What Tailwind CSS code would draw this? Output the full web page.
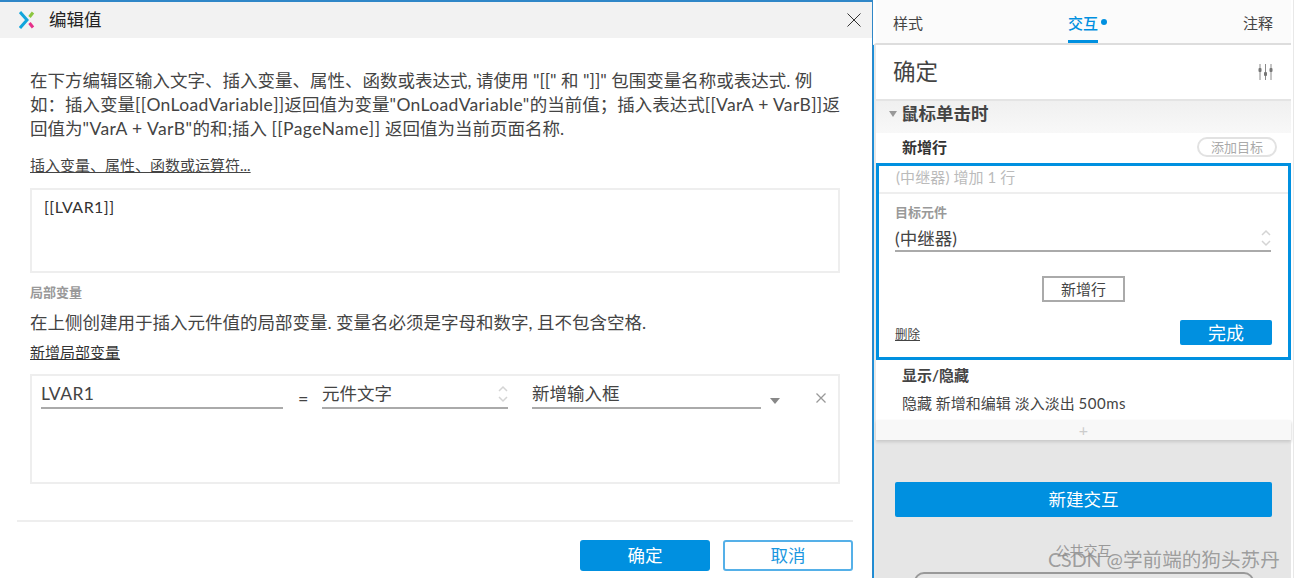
<!DOCTYPE html>
<html lang="zh">
<head>
<meta charset="utf-8">
<script src="https://cdn.jsdelivr.net/npm/@tailwindcss/browser@4"></script>
</head>
<body class="m-0 bg-white">
<div class="relative flex h-[578px] w-[1295px] overflow-hidden bg-white font-['Lato','Noto_Sans_CJK_SC',sans-serif] text-[#333]">
  <!-- Dialog -->
  <div class="flex h-full w-[873px] shrink-0 flex-col border-t-2 border-r border-[#2f87c8] bg-white">
    <div class="flex h-[36px] shrink-0 items-center bg-[#f2f2f2] pl-[19px] pr-[11px]">
      <svg class="h-[20px] w-[16px]" viewBox="0 0 16 20" fill="none" stroke-width="3">
        <path d="M1 2L8 10L1 18" stroke="#12a5dc"/>
        <path d="M14 2.500L10.500 7" stroke="#8cc63f"/>
        <path d="M10.500 13L14 17.500" stroke="#e6308a"/>
      </svg>
      <span class="ml-[14px] text-[17.500px] leading-none text-[#222]">编辑值</span>
      <svg class="ml-auto h-[14px] w-[14px]" viewBox="0 0 14 14" fill="none" stroke="#333" stroke-width="1"><path d="M0.500 0.500L13.500 13.500M13.500 0.500L0.500 13.500"/></svg>
    </div>
    <div class="flex flex-1 flex-col pl-[30px] pr-[31px]">
      <p class="mt-[31px] whitespace-nowrap text-[17.500px] leading-[24px] text-[#444]">在下方编辑区输入文字、插入变量、属性、函数或表达式, 请使用 "[[" 和 "]]" 包围变量名称或表达式. 例<br>如：插入变量<span class="tracking-[0.35px]">[[OnLoadVariable]]</span>返回值为变量<span class="tracking-[0.35px]">"OnLoadVariable"</span>的当前值；插入表达式<span class="tracking-[0.35px]">[[VarA + VarB]]</span>返<br>回值为<span class="tracking-[0.44px]">"VarA + VarB"</span>的和;插入 <span class="tracking-[0.44px]">[[PageName]]</span> 返回值为当前页面名称.</p>
      <a class="mt-[13px] self-start text-[15px] leading-[22px] text-[#444] underline">插入变量、属性、函数或运算符...</a>
      <div class="mt-[12px] h-[85px] w-[810px] border-2 border-[#eeeeee] px-[12px] py-[6px] text-[16px] leading-[22px] tracking-[0.45px] text-[#333]">[[LVAR1]]</div>
      <div class="mt-[10px] text-[13px] font-semibold leading-[18px] text-[#999]">局部变量</div>
      <p class="mt-[10px] text-[17.500px] leading-[24px] text-[#444]">在上侧创建用于插入元件值的局部变量. 变量名必须是字母和数字, 且不包含空格.</p>
      <a class="mt-[6px] self-start text-[15px] leading-[22px] text-[#333] underline">新增局部变量</a>
      <div class="mt-[11px] flex h-[110px] w-[810px] items-start border-2 border-[#eeeeee] pl-[9px] pt-[4px]">
        <div class="h-[29px] w-[242px] border-b-2 border-[#aaaaaa] text-[17.500px] leading-[28px] tracking-[0.4px] text-[#444]">LVAR1</div>
        <span class="ml-[15px] mr-[14px] mt-[5px] w-[10px] text-center text-[18px] leading-[26px] text-[#444]">=</span>
        <div class="flex h-[29px] w-[186px] items-start justify-between border-b-2 border-[#aaaaaa] text-[17.500px] leading-[28px] text-[#444]">
          <span>元件文字</span>
          <svg class="mt-[5px] h-[18px] w-[10px]" viewBox="0 0 10 18" fill="none" stroke="#d4d4d4" stroke-width="1.500"><path d="M1 6L5 2L9 6M1 12L5 16L9 12"/></svg>
        </div>
        <div class="ml-[24px] h-[29px] w-[229px] border-b-2 border-[#aaaaaa] text-[17.500px] leading-[28px] text-[#444]">新增输入框</div>
        <span class="ml-[9px] mt-[18px] h-0 w-0 border-x-[5px] border-t-[6px] border-x-transparent border-t-[#888888]"></span>
        <svg class="ml-[36px] mt-[13px] h-[10px] w-[10px]" viewBox="0 0 10 10" fill="none" stroke="#999" stroke-width="1.300"><path d="M0.500 0.500L9.500 9.500M9.500 0.500L0.500 9.500"/></svg>
      </div>
      <div class="-ml-[13px] mt-[36px] h-[2px] w-[836px] shrink-0 bg-[#eeeeee]"></div>
      <div class="-mr-[12px] mt-[18px] flex justify-end gap-[13px]">
        <button class="h-[31px] w-[130px] rounded-[3px] bg-[#0090e0] text-[17.500px] leading-none text-white">确定</button>
        <button class="h-[31px] w-[130px] rounded-[3px] border-2 border-[#55b0e8] bg-white text-[17.500px] leading-none text-[#1a97e0]">取消</button>
      </div>
    </div>
  </div>

  <!-- Right panel -->
  <div class="flex h-full w-[418px] shrink-0 flex-col">
    <div class="flex h-[45px] shrink-0 items-start justify-between border-b-2 border-l-[3px] border-b-[#dddddd] border-l-white bg-[#fbfbfb] pl-[17px] pr-[18px] pt-[12px] text-[15px] leading-[22px] text-[#444]">
      <span>样式</span>
      <span class="relative h-[31px] border-b-[3px] border-[#0090e0] font-medium text-[#0090e0]">交互<i class="absolute left-[33px] top-[7px] h-[6px] w-[6px] rounded-full bg-[#0090e0]"></i></span>
      <span>注释</span>
    </div>
    <div class="flex flex-1 flex-col border-l border-[#1590dc]">
      <div class="flex flex-1 flex-col border-l-2 border-[#e8e8e8] bg-[#e6e6e6]">
        <div class="flex h-[54px] shrink-0 items-center justify-between bg-white pl-[17px] pr-[18px]">
          <span class="text-[22.500px] leading-none text-[#444]">确定</span>
          <svg class="h-[16px] w-[15px]" viewBox="0 0 15 16" fill="none" stroke="#8a8a8a" stroke-width="1">
            <path d="M2 0V16M7.500 0V16M13 0V16"/>
            <rect x="0.500" y="4" width="3" height="4" rx="1" fill="#777" stroke="none"/>
            <rect x="6" y="8" width="3" height="4" rx="1" fill="#777" stroke="none"/>
            <rect x="11.500" y="4" width="3" height="4" rx="1" fill="#777" stroke="none"/>
          </svg>
        </div>
        <div class="flex h-[34px] shrink-0 items-center border-t-2 border-[#e4e4e4] bg-gradient-to-b from-[#f0f0f0] to-[#f8f8f8] pb-[6px] pl-[13px]">
          <span class="h-0 w-0 border-x-[4px] border-t-[6px] border-x-transparent border-t-[#999999]"></span>
          <span class="ml-[4px] text-[17.500px] font-bold leading-none text-[#444]">鼠标单击时</span>
        </div>
        <div class="flex h-[30px] shrink-0 items-center justify-between bg-white pb-[2px] pl-[26px] pr-[14px]">
          <span class="text-[15px] font-bold leading-none text-[#333]">新增行</span>
          <span class="flex h-[20px] w-[80px] items-center justify-center rounded-full border-2 border-[#e2e2e2] text-[13px] leading-none text-[#aaaaaa]">添加目标</span>
        </div>
        <div class="h-[197px] w-[415px] shrink-0 border-[3px] border-[#0090e0] bg-white">
          <div class="flex h-[28px] items-center border-b-2 border-[#eeeeee] pb-[4px] pl-[17px] text-[15px] leading-none tracking-[0.1px] text-[#bbbbbb]">(中继器) 增加 1 行</div>
          <div class="flex flex-col px-[16px]">
            <div class="mt-[9px] text-[13px] font-semibold leading-[18px] text-[#999999]">目标元件</div>
            <div class="mt-[1px] flex h-[30px] w-[376px] items-center justify-between border-b-2 border-[#aaaaaa] pt-[6px] text-[17.500px] leading-none text-[#444]">
              <span>(中继器)</span>
              <svg class="-mt-[2px] h-[18px] w-[10px]" viewBox="0 0 10 18" fill="none" stroke="#d4d4d4" stroke-width="1.500"><path d="M1 6L5 2L9 6M1 12L5 16L9 12"/></svg>
            </div>
            <button class="ml-[147px] mt-[24px] h-[26px] w-[83px] border-2 border-[#aaaaaa] text-[15px] leading-none text-[#444]">新增行</button>
            <div class="mt-[18px] flex items-center justify-between">
              <a class="mt-[5px] text-[12.500px] leading-none text-[#444] underline">删除</a>
              <button class="h-[25px] w-[92px] rounded-[2px] bg-[#0090e0] text-[18px] leading-none text-white">完成</button>
            </div>
          </div>
        </div>
        <div class="flex h-[60px] shrink-0 flex-col bg-white pl-[26px]">
          <span class="mt-[5px] text-[15px] font-bold leading-[20px] text-[#444]">显示/隐藏</span>
          <span class="mt-[8px] text-[15px] leading-[20px] text-[#444]">隐藏 新增和编辑 淡入淡出 <span class="tracking-[0.5px]">500ms</span></span>
        </div>
        <div class="flex h-[20px] shrink-0 items-center justify-center bg-[#f8f8f8] text-[16px] leading-none text-[#cccccc] shadow-[0_2px_3px_#c8c8c8]">+</div>
        <div class="flex flex-1 flex-col items-center">
          <button class="mt-[42px] h-[35px] w-[377px] shrink-0 rounded-[2px] bg-[#0090e0] text-[17.500px] leading-none text-white">新建交互</button>
          <span class="mt-[26px] text-[14px] leading-[16px] text-[#999999]">公共交互</span>
          <div class="mt-[13px] h-[20px] w-[340px] shrink-0 rounded-[10px] border-2 border-[#999999]"></div>
        </div>
      </div>
    </div>
  </div>
  <div class="h-full w-[3px] shrink-0 border-r border-[#e8e8e8]"></div>
  <span class="absolute left-[1048px] top-[548px] text-[19.600px] leading-[24px] text-[#8a8a8a]/80">CSDN @学前端的狗头苏丹</span>
</div>
</body>
</html>
